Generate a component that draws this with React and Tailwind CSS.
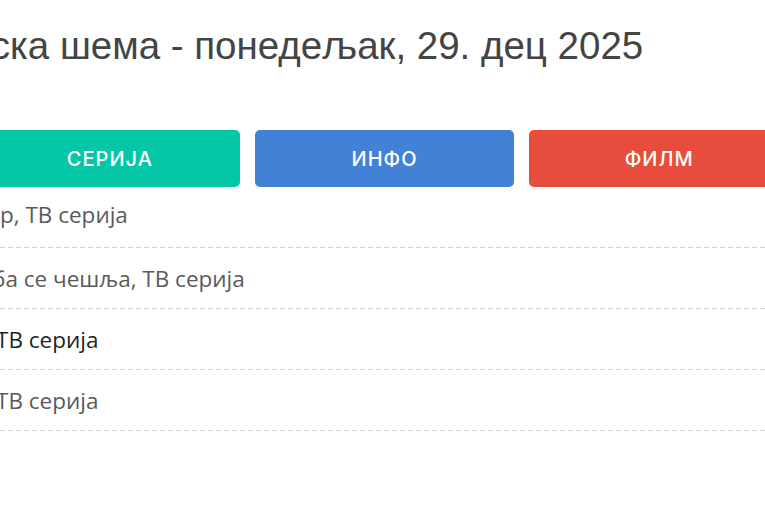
const tabs = [
  { label: 'СЕРИЈА', color: 'bg-[#05c6a6]' },
  { label: 'ИНФО', color: 'bg-[#4282d6]' },
  { label: 'ФИЛМ', color: 'bg-[#e74c3c]' },
];

const rows = [
  { text: 'р, ТВ серија', shift: 'ml-[0px]', tone: 'text-[#5a5a5a]', pad: 'pb-[6px]' },
  { text: 'ба се чешља, ТВ серија', shift: 'ml-[-8px]', tone: 'text-[#5a5a5a]', pad: '' },
  { text: 'ТВ серија', shift: 'ml-[-4px]', tone: 'text-[#1f1f1f]', pad: '' },
  { text: 'ТВ серија', shift: 'ml-[-4px]', tone: 'text-[#5a5a5a]', pad: '' },
];

export default function App() {
  return (
    <div className="w-[765px] h-[510px] overflow-hidden bg-white">
      {/* title runs off the left edge in the capture */}
      <h1 className="pt-[26px] ml-[-163px] whitespace-nowrap text-[38.5px] leading-[40px] text-[#444] font-['Liberation_Sans',Arial,sans-serif]">
        Програмска шема - понедељак, 29. дец 2025
      </h1>

      <div className="mt-[64px] ml-[-20px] w-[809px] grid grid-cols-3 gap-[15px]">
        {tabs.map((t) => (
          <button
            key={t.label}
            className={`${t.color} h-[57px] rounded-[5px] text-white text-[20px] font-medium tracking-[1px] font-['Inter',sans-serif]`}
          >
            {t.label}
          </button>
        ))}
      </div>

      <ul className="font-['Open_Sans',sans-serif] text-[22.5px]">
        {rows.map((r, i) => (
          <li
            key={i}
            className={`h-[61px] flex items-center whitespace-nowrap bg-bottom bg-no-repeat bg-[length:100%_1px] bg-[image:repeating-linear-gradient(to_right,#d4d4d4_0_5px,transparent_5px_8px)] ${r.pad}`}
          >
            <span className={`${r.shift} ${r.tone}`}>{r.text}</span>
          </li>
        ))}
      </ul>
    </div>
  );
}
